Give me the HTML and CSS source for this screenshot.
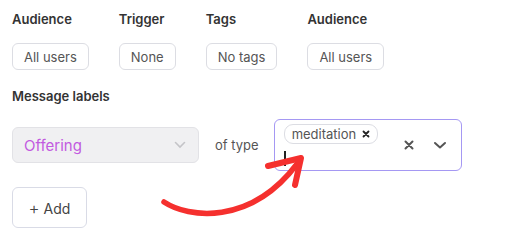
FILE: index.html
```html
<!DOCTYPE html>
<html lang="en">
<head>
    <meta charset="UTF-8">
    <meta name="viewport" content="width=device-width, initial-scale=1.0">
    <title>Message labels</title>
    <link rel="stylesheet" href="styles.css">
</head>
<body>
    <div class="page">
        <div class="filters">
            <div class="filter">
                <span class="label">Audience</span>
                <button class="chip">All users</button>
            </div>
            <div class="filter">
                <span class="label">Trigger</span>
                <button class="chip">None</button>
            </div>
            <div class="filter">
                <span class="label">Tags</span>
                <button class="chip">No tags</button>
            </div>
            <div class="filter">
                <span class="label">Audience</span>
                <button class="chip">All users</button>
            </div>
        </div>

        <div class="label section-label">Message labels</div>

        <div class="label-row">
            <div class="select">
                <span class="select-value">Offering</span>
                <svg class="chevron light" width="12" height="8" viewBox="0 0 12 8">
                    <path d="M1.5 1.5 L6 6 L10.5 1.5" fill="none" stroke="currentColor" stroke-width="1.6" stroke-linecap="round"/>
                </svg>
            </div>
            <span class="of-type">of type</span>
            <div class="multi">
                <div class="multi-values">
                    <span class="tag">meditation
                        <svg width="8" height="8" viewBox="0 0 8 8">
                            <path d="M1.5 1.5 L6.5 6.5 M6.5 1.5 L1.5 6.5" stroke="#222" stroke-width="1.8" stroke-linecap="round"/>
                        </svg>
                    </span>
                    <span class="cursor"></span>
                </div>
                <div class="indicators">
                    <svg width="12" height="12" viewBox="0 0 12 12">
                        <path d="M2.5 2.5 L9.5 9.5 M9.5 2.5 L2.5 9.5" stroke="#555" stroke-width="2" stroke-linecap="round"/>
                    </svg>
                    <svg class="chevron" width="14" height="9" viewBox="0 0 14 9">
                        <path d="M2 2 L7 6.5 L12 2" fill="none" stroke="#555" stroke-width="2" stroke-linecap="round" stroke-linejoin="round"/>
                    </svg>
                </div>
            </div>
        </div>

        <button class="add"><span class="plus">+</span> Add</button>

        <svg class="arrow" width="525" height="240" viewBox="0 0 525 240">
            <path d="M164 202 C 188 218, 250 226, 297 164" fill="none" stroke="#f5302e" stroke-width="5.5" stroke-linecap="round"/>
            <path d="M268 166 L 301 158 L 295 185" fill="none" stroke="#f5302e" stroke-width="6" stroke-linecap="round" stroke-linejoin="round"/>
        </svg>
    </div>
</body>
</html>
```

FILE: styles.css
```css
body{
    margin: 0;
    font-family: "Inter", "Liberation Sans", sans-serif;
    color: #333;
    background-color: #fff;
}
.page{
    position: relative;
    width: 525px;
    height: 240px;
    padding: 11px 12px 0 12px;
    box-sizing: border-box;
}
.filters{
    display: flex;
    gap: 30px;
}
.filter{
    display: flex;
    flex-direction: column;
    align-items: flex-start;
    gap: 16px;
}
.label{
    font-size: 13px;
    font-weight: 600;
    line-height: 16px;
    color: #333;
}
.chip{
    height: 27px;
    padding: 0 11px;
    font-family: inherit;
    font-size: 13px;
    color: #555;
    background-color: #fff;
    border: 1px solid #dcdde3;
    border-radius: 6px;
}
.section-label{
    margin-top: 18px;
}
.label-row{
    display: flex;
    align-items: center;
    margin-top: 15px;
}
.select{
    width: 187px;
    height: 36px;
    box-sizing: border-box;
    display: flex;
    align-items: center;
    justify-content: space-between;
    padding: 0 12px 0 11px;
    background-color: #f0f0f2;
    border: 1px solid #e2e2e6;
    border-radius: 6px;
}
.select-value{
    font-size: 15px;
    color: #c25ae0;
}
.chevron.light{
    color: #c4c4c8;
}
.of-type{
    margin: 0 15px 0 16px;
    font-size: 13px;
    color: #555;
}
.multi{
    width: 188px;
    height: 52px;
    box-sizing: border-box;
    display: flex;
    align-items: center;
    padding: 0 14px 0 9px;
    border: 1.5px solid #a598f3;
    border-radius: 6px;
}
.multi-values{
    flex: 1;
    display: flex;
    flex-direction: column;
    align-items: flex-start;
    gap: 7px;
}
.tag{
    display: flex;
    align-items: center;
    gap: 6px;
    height: 18px;
    padding: 0 7px 0 7px;
    font-size: 13px;
    color: #555;
    border: 1px solid #dcdde3;
    border-radius: 9px;
}
.cursor{
    width: 2px;
    height: 15px;
    background-color: #222;
}
.indicators{
    display: flex;
    align-items: center;
    gap: 18px;
}
.add{
    display: block;
    margin-top: 16px;
    width: 75px;
    height: 41px;
    font-family: inherit;
    font-size: 14px;
    color: #444;
    background-color: #fff;
    border: 1px solid #d9dbe6;
    border-radius: 6px;
}
.plus{
    font-size: 17px;
    font-weight: 300;
}
.arrow{
    position: absolute;
    left: 0;
    top: 0;
    pointer-events: none;
}
```
